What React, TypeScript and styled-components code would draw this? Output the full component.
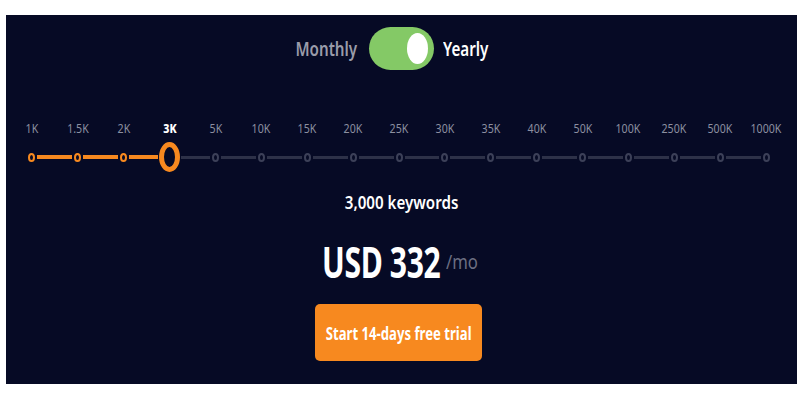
import React, { useState } from "react";
import styled, { createGlobalStyle } from "styled-components";

const GlobalStyle = createGlobalStyle`
  body {
    margin: 0;
    background: #ffffff;
    font-family: "Noto Sans", Roboto, sans-serif;
  }
`;

const Panel = styled.section`
  box-sizing: border-box;
  height: 369px;
  margin: 15px 3px 16px 6px;
  background: #060a25;
  display: flex;
  flex-direction: column;
  align-items: center;
`;

const ToggleRow = styled.div`
  margin-top: 12px;
  width: 100%;
  display: grid;
  grid-template-columns: 1fr auto 1fr;
  align-items: center;
`;

const PlanLabel = styled.span<{ $active?: boolean; $side: "left" | "right" }>`
  justify-self: ${(p) => (p.$side === "left" ? "end" : "start")};
  margin: ${(p) => (p.$side === "left" ? "0 12px 0 0" : "0 0 0 9px")};
  display: inline-block;
  white-space: nowrap;
  transform: scaleX(0.78);
  transform-origin: ${(p) => (p.$side === "left" ? "right" : "left")} center;
  font-size: 19.5px;
  font-weight: 600;
  color: ${(p) => (p.$active ? "#ffffff" : "#9a9caa")};
`;

const Switch = styled.button<{ $on: boolean }>`
  box-sizing: border-box;
  width: 65px;
  height: 43px;
  border: none;
  border-radius: 22px;
  padding: 0 6px;
  background: #84c966;
  display: flex;
  align-items: center;
  justify-content: ${(p) => (p.$on ? "flex-end" : "flex-start")};
  cursor: pointer;
`;

const Knob = styled.span`
  width: 21px;
  height: 31px;
  border-radius: 50%;
  background: #ffffff;
`;

const Slider = styled.div`
  align-self: flex-start;
  margin: 51px 0 0 3px;
  width: 780px;
  display: grid;
  grid-template-columns: repeat(17, 1fr);
  grid-template-rows: 16px 30px;
  row-gap: 5px;
`;

const StopLabel = styled.span<{ $active: boolean }>`
  text-align: center;
  white-space: nowrap;
  transform: scaleX(0.85);
  font-size: 12.5px;
  line-height: 16px;
  font-weight: ${(p) => (p.$active ? 800 : 400)};
  color: ${(p) => (p.$active ? "#ffffff" : "#8c8fa0")};
`;

const StopCell = styled.div`
  display: flex;
  align-items: center;
`;

const Segment = styled.span<{ $fill: boolean; $hidden: boolean }>`
  flex: 1;
  height: ${(p) => (p.$fill ? 4 : 3)}px;
  background: ${(p) =>
    p.$hidden ? "transparent" : p.$fill ? "#f7891f" : "#2d3148"};
`;

const Dot = styled.span<{ $fill: boolean }>`
  box-sizing: border-box;
  flex: none;
  margin: 0 2px;
  width: 7px;
  height: 9px;
  border-radius: 50%;
  border: 2px solid ${(p) => (p.$fill ? "#f7891f" : "#3c4058")};
`;

const Handle = styled.span`
  box-sizing: border-box;
  flex: none;
  margin: 0 1px;
  width: 21px;
  height: 30px;
  border-radius: 50%;
  border: 5px solid #f7891f;
  background: #060a25;
`;

const Keywords = styled.div`
  margin-top: 19px;
  white-space: nowrap;
  transform: scaleX(0.84);
  font-size: 18px;
  line-height: 22px;
  font-weight: 600;
  color: #ffffff;
`;

const PriceRow = styled.div`
  margin: 24px 4px 0 0;
  height: 48px;
  display: flex;
  align-items: center;
  gap: 6px;
`;

const Price = styled.span`
  display: inline-block;
  width: 118px;
  white-space: nowrap;
  transform: scaleX(0.7);
  transform-origin: left center;
  font-size: 43px;
  font-weight: 700;
  color: #ffffff;
  letter-spacing: -0.5px;
`;

const Period = styled.span`
  display: inline-block;
  width: 32px;
  margin-top: 2px;
  white-space: nowrap;
  transform: scaleX(0.88);
  transform-origin: left center;
  font-size: 19px;
  color: #6c6f82;
`;

const TrialButton = styled.button`
  margin: 19px 6px 0 0;
  width: 167px;
  height: 57px;
  border: none;
  border-radius: 5px;
  background: #f7891f;
  display: flex;
  align-items: center;
  justify-content: center;
  cursor: pointer;
`;

const ButtonText = styled.span`
  display: inline-block;
  white-space: nowrap;
  transform: scaleX(0.71);
  color: #ffffff;
  font-family: "Noto Sans", Roboto, sans-serif;
  font-size: 18.5px;
  font-weight: 700;
`;

const stops = [
  "1K", "1.5K", "2K", "3K", "5K", "10K", "15K", "20K", "25K",
  "30K", "35K", "40K", "50K", "100K", "250K", "500K", "1000K",
];

const App = () => {
  const [yearly, setYearly] = useState(true);
  const active = 3;
  const last = stops.length - 1;

  return (
    <>
      <GlobalStyle />
      <Panel>
        <ToggleRow>
          <PlanLabel $side="left" $active={!yearly}>
            Monthly
          </PlanLabel>
          <Switch $on={yearly} onClick={() => setYearly(!yearly)}>
            <Knob />
          </Switch>
          <PlanLabel $side="right" $active={yearly}>
            Yearly
          </PlanLabel>
        </ToggleRow>

        <Slider>
          {stops.map((s, i) => (
            <StopLabel key={s} $active={i === active}>
              {s}
            </StopLabel>
          ))}
          {stops.map((s, i) => (
            <StopCell key={"t" + s}>
              <Segment $hidden={i === 0} $fill={i <= active} />
              {i === active ? <Handle /> : <Dot $fill={i < active} />}
              <Segment $hidden={i === last} $fill={i < active} />
            </StopCell>
          ))}
        </Slider>

        <Keywords>3,000 keywords</Keywords>
        <PriceRow>
          <Price>USD 332</Price>
          <Period>/mo</Period>
        </PriceRow>
        <TrialButton>
          <ButtonText>Start 14-days free trial</ButtonText>
        </TrialButton>
      </Panel>
    </>
  );
};

export default App;
